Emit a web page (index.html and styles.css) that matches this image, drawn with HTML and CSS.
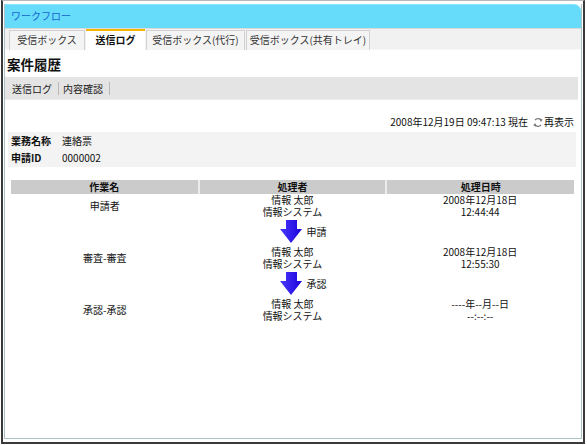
FILE: index.html
```html
<!DOCTYPE html>
<html lang="ja">
<head>
<meta charset="utf-8">
<title>ワークフロー</title>
<link rel="stylesheet" href="styles.css">
</head>
<body>
<div class="frame">
  <div class="panel">
    <div class="header">ワークフロー</div>
    <div class="tabs">
      <div class="tab t1">受信ボックス</div>
      <div class="tab t2 active">送信ログ</div>
      <div class="tab t3">受信ボックス(代行)</div>
      <div class="tab t4">受信ボックス(共有トレイ)</div>
    </div>
    <h1 class="title">案件履歴</h1>
    <div class="toolbar">
      <span class="tool">送信ログ</span>
      <span class="tool">内容確認</span>
    </div>
    <div class="now">
      <span>2008年12月19日 09:47:13 現在</span>
      <span class="reload">
        <svg class="reload-icon" width="10" height="11" viewBox="0 0 10 11">
          <path d="M2 3.2 A3.6 3.6 0 0 1 8.4 4.2" fill="none" stroke="#777" stroke-width="1.2"/>
          <path d="M6.8 1.2 L7.6 4.6 L9.8 2.8 Z" fill="#777"/>
          <path d="M8 7.8 A3.6 3.6 0 0 1 1.6 6.8" fill="none" stroke="#777" stroke-width="1.2"/>
          <path d="M3.2 9.8 L2.4 6.4 L0.2 8.2 Z" fill="#777"/>
        </svg>再表示
      </span>
    </div>
    <div class="info">
      <div class="info-row"><span class="label">業務名称</span><span>連絡票</span></div>
      <div class="info-row"><span class="label">申請ID</span><span>0000002</span></div>
    </div>
    <table class="history">
      <thead>
        <tr><th>作業名</th><th>処理者</th><th>処理日時</th></tr>
      </thead>
      <tbody>
        <tr class="step">
          <td>申請者</td>
          <td><div class="ln">情報 太郎</div><div class="ln">情報システム</div></td>
          <td><div class="ln">2008年12月18日</div><div class="ln">12:44:44</div></td>
        </tr>
        <tr class="flow">
          <td></td>
          <td><span class="arrow-wrap"><svg class="arrow" width="22" height="24" viewBox="0 0 22 24"><defs><linearGradient id="g1" x1="0" y1="0" x2="1" y2="0"><stop offset="0" stop-color="#4a3cff"/><stop offset="1" stop-color="#1a00d8"/></linearGradient></defs><path d="M6 0 H17 V9 H22 L11 23 L0 9 H6 Z" fill="url(#g1)"/></svg><span class="flow-label">申請</span></span></td>
          <td></td>
        </tr>
        <tr class="step">
          <td>審査-審査</td>
          <td><div class="ln">情報 太郎</div><div class="ln">情報システム</div></td>
          <td><div class="ln">2008年12月18日</div><div class="ln">12:55:30</div></td>
        </tr>
        <tr class="flow">
          <td></td>
          <td><span class="arrow-wrap"><svg class="arrow" width="22" height="24" viewBox="0 0 22 24"><defs><linearGradient id="g2" x1="0" y1="0" x2="1" y2="0"><stop offset="0" stop-color="#4a3cff"/><stop offset="1" stop-color="#1a00d8"/></linearGradient></defs><path d="M6 0 H17 V9 H22 L11 23 L0 9 H6 Z" fill="url(#g2)"/></svg><span class="flow-label">承認</span></span></td>
          <td></td>
        </tr>
        <tr class="step">
          <td>承認-承認</td>
          <td><div class="ln">情報 太郎</div><div class="ln">情報システム</div></td>
          <td><div class="ln">----年--月--日</div><div class="ln">--:--:--</div></td>
        </tr>
      </tbody>
    </table>
  </div>
</div>
</body>
</html>
```

FILE: styles.css
```css
html, body {
  margin: 0;
  padding: 0;
  background: #ffffff;
}
body {
  font-family: "Noto Sans CJK JP", "Liberation Sans", sans-serif;
  font-size: 10px;
  line-height: 12px;
  color: #111;
}
.frame {
  box-sizing: border-box;
  width: 584px;
  height: 444px;
  margin: 0 0 0 1px;
  border-top: 1px solid #b8b8b8;
  border-left: 2px solid #3a3a3a;
  border-right: 2px solid #3a3a3a;
  border-bottom: 2px solid #3a3a3a;
  padding: 3px 1px 3px 1px;
}
.panel {
  box-sizing: border-box;
  height: 100%;
  border: 1px solid #a9c3c7;
  border-top: none;
}
.header {
  height: 23px;
  background: #66dcfa;
  color: #1565cf;
  padding-left: 6px;
  line-height: 22px;
  border-top-right-radius: 7px;
  border-top: 1px solid #86e6fb;
}
.tabs {
  display: flex;
  height: 20px;
  background: #f1f1f1;
  padding-left: 4px;
  border-top: 1px solid #d9d9d9;
  border-bottom: 1px dotted #ffffff;
}
.tab {
  box-sizing: border-box;
  height: 20px;
  margin-top: 1px;
  background: #f4f4f4;
  border: 1px solid #d2d2d2;
  border-bottom: none;
  color: #333;
  text-align: center;
  line-height: 18px;
  margin-right: 1px;
}
.t1 { width: 76px; }
.t2 { width: 59px; }
.t3 { width: 99px; }
.t4 { width: 124px; }
.tab.active {
  background: #ffffff;
  border: none;
  border-top: 2px solid #f5b400;
  font-weight: bold;
  margin-top: 0;
  height: 22px;
  line-height: 18px;
  color: #111;
}
.title {
  margin: 0;
  padding: 6px 0 0 2px;
  height: 24px;
  box-sizing: border-box;
  font-size: 13.5px;
  line-height: 16px;
  font-weight: bold;
  color: #111;
}
.toolbar {
  display: flex;
  height: 22px;
  background: #e4e4e4;
  margin: 3px 3px 0 0;
  padding-left: 3px;
  align-items: center;
  border-bottom: 1px dotted #f4f4f4;
}
.tool {
  padding: 0 6px 0 4px;
  border-right: 1px solid #b8b8b8;
  line-height: 13px;
  color: #222;
}
.now {
  display: flex;
  justify-content: flex-end;
  align-items: center;
  gap: 5px;
  margin-top: 15px;
  padding-right: 7px;
  height: 14px;
}
.reload {
  display: flex;
  align-items: center;
  gap: 1px;
}
.info {
  margin: 3px 5px 0 3px;
  background: #f3f3f3;
  padding: 0 0 1px 3px;
}
.info-row {
  display: flex;
  height: 17px;
  align-items: center;
}
.label {
  width: 51px;
  font-weight: bold;
}
.history {
  margin: 13px 0 0 6px;
  width: 563px;
  border-collapse: collapse;
  table-layout: fixed;
}
.history th {
  background: #cbcbcb;
  height: 14px;
  padding: 0;
  font-weight: bold;
  text-align: center;
  border-right: 2px solid #ececec;
  line-height: 14px;
}
.history th:last-child { border-right: none; }
.history td {
  padding: 0;
  text-align: center;
  vertical-align: middle;
}
.ln {
  height: 12px;
  line-height: 12px;
}
.step td {
  height: 24px;
}
.flow td {
  height: 28px;
}
.arrow-wrap {
  position: relative;
  display: block;
  width: 22px;
  height: 24px;
  margin: 0 auto;
  left: -1px;
}
.arrow { display: block; }
.flow-label {
  position: absolute;
  left: 26px;
  top: 6px;
  white-space: nowrap;
}
```
